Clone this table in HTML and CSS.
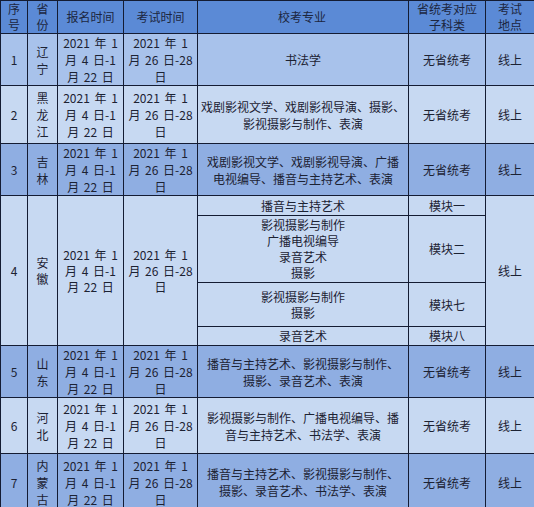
FILE: index.html
```html
<!DOCTYPE html>
<html lang="zh">
<head>
<meta charset="utf-8">
<link rel="stylesheet" href="styles.css">
</head>
<body>
<table class="grid">
  <colgroup>
    <col class="c1"><col class="c2"><col class="c3"><col class="c4"><col class="c5"><col class="c6"><col class="c7">
  </colgroup>
  <thead>
    <tr class="head">
      <th>序<br>号</th>
      <th>省<br>份</th>
      <th>报名时间</th>
      <th>考试时间</th>
      <th class="left-pad">校考专业</th>
      <th>省统考对应<br>子科类</th>
      <th>考试<br>地点</th>
    </tr>
  </thead>
  <tbody>
    <tr class="r1 mid">
      <td>1</td>
      <td>辽<br>宁</td>
      <td class="date">2021 年 1<br>月 4 日-1<br>月 22 日</td>
      <td class="date">2021 年 1<br>月 26 日-28<br>日</td>
      <td>书法学</td>
      <td>无省统考</td>
      <td>线上</td>
    </tr>
    <tr class="r2 light">
      <td>2</td>
      <td>黑<br>龙<br>江</td>
      <td class="date">2021 年 1<br>月 4 日-1<br>月 22 日</td>
      <td class="date">2021 年 1<br>月 26 日-28<br>日</td>
      <td>戏剧影视文学、戏剧影视导演、摄影、<br>影视摄影与制作、表演</td>
      <td>无省统考</td>
      <td>线上</td>
    </tr>
    <tr class="r3 dark">
      <td>3</td>
      <td>吉<br>林</td>
      <td class="date">2021 年 1<br>月 4 日-1<br>月 22 日</td>
      <td class="date">2021 年 1<br>月 26 日-28<br>日</td>
      <td>戏剧影视文学、戏剧影视导演、广播<br>电视编导、播音与主持艺术、表演</td>
      <td>无省统考</td>
      <td>线上</td>
    </tr>
    <tr class="r4a light">
      <td rowspan="4">4</td>
      <td rowspan="4">安<br>徽</td>
      <td rowspan="4" class="date">2021 年 1<br>月 4 日-1<br>月 22 日</td>
      <td rowspan="4" class="date">2021 年 1<br>月 26 日-28<br>日</td>
      <td>播音与主持艺术</td>
      <td>模块一</td>
      <td rowspan="4">线上</td>
    </tr>
    <tr class="r4b light">
      <td>影视摄影与制作<br>广播电视编导<br>录音艺术<br>摄影</td>
      <td>模块二</td>
    </tr>
    <tr class="r4c light">
      <td>影视摄影与制作<br>摄影</td>
      <td>模块七</td>
    </tr>
    <tr class="r4d light">
      <td>录音艺术</td>
      <td>模块八</td>
    </tr>
    <tr class="r5 dark">
      <td>5</td>
      <td>山<br>东</td>
      <td class="date">2021 年 1<br>月 4 日-1<br>月 22 日</td>
      <td class="date">2021 年 1<br>月 26 日-28<br>日</td>
      <td>播音与主持艺术、影视摄影与制作、<br>摄影、录音艺术、表演</td>
      <td>无省统考</td>
      <td>线上</td>
    </tr>
    <tr class="r6 light">
      <td>6</td>
      <td>河<br>北</td>
      <td class="date">2021 年 1<br>月 4 日-1<br>月 22 日</td>
      <td class="date">2021 年 1<br>月 26 日-28<br>日</td>
      <td>影视摄影与制作、广播电视编导、播<br>音与主持艺术、书法学、表演</td>
      <td>无省统考</td>
      <td>线上</td>
    </tr>
    <tr class="r7 dark">
      <td>7</td>
      <td>内<br>蒙<br>古</td>
      <td class="date">2021 年 1<br>月 4 日-1<br>月 22 日</td>
      <td class="date">2021 年 1<br>月 26 日-28<br>日</td>
      <td>播音与主持艺术、影视摄影与制作、<br>摄影、录音艺术、书法学、表演</td>
      <td>无省统考</td>
      <td>线上</td>
    </tr>
  </tbody>
</table>
</body>
</html>
```

FILE: styles.css
```css
html, body {
  margin: 0;
  padding: 0;
  background: #ffffff;
}

.grid {
  width: 534px;
  border-collapse: collapse;
  table-layout: fixed;
  font-family: "Noto Sans CJK SC", "DejaVu Sans", sans-serif;
  font-size: 12px;
  line-height: 17px;
  color: #1c2233;
}

.c1 { width: 27px; }
.c2 { width: 30px; }
.c3 { width: 66px; }
.c4 { width: 74px; }
.c5 { width: 211px; }
.c6 { width: 77px; }
.c7 { width: 49px; }

.grid th,
.grid td {
  border: 1px solid #141c33;
  padding: 0;
  text-align: center;
  vertical-align: middle;
  font-weight: normal;
  overflow: hidden;
  white-space: nowrap;
}

.grid .date {
  word-spacing: 2px;
}

.head th {
  background: #5b8ad6;
  line-height: 16px;
  color: #1c2640;
}

.head .left-pad {
  text-align: left;
  padding-left: 80px;
}

.mid td { background: #a8c2eb; }
.light td { background: #c7d9f2; }
.dark td { background: #8faee2; }

.head { height: 33px; }
.r1 { height: 50px; }
.r2 { height: 58px; }
.r3 { height: 51px; }
.r4a { height: 20px; }
.r4b { height: 67px; }
.r4c { height: 44px; }
.r4d { height: 19px; }
.r5 { height: 51px; }
.r6 { height: 56px; }
.r7 { height: 57px; }

.r4b td, .r4c td { line-height: 16px; }
.r4a td, .r4d td { line-height: 16px; }
```
